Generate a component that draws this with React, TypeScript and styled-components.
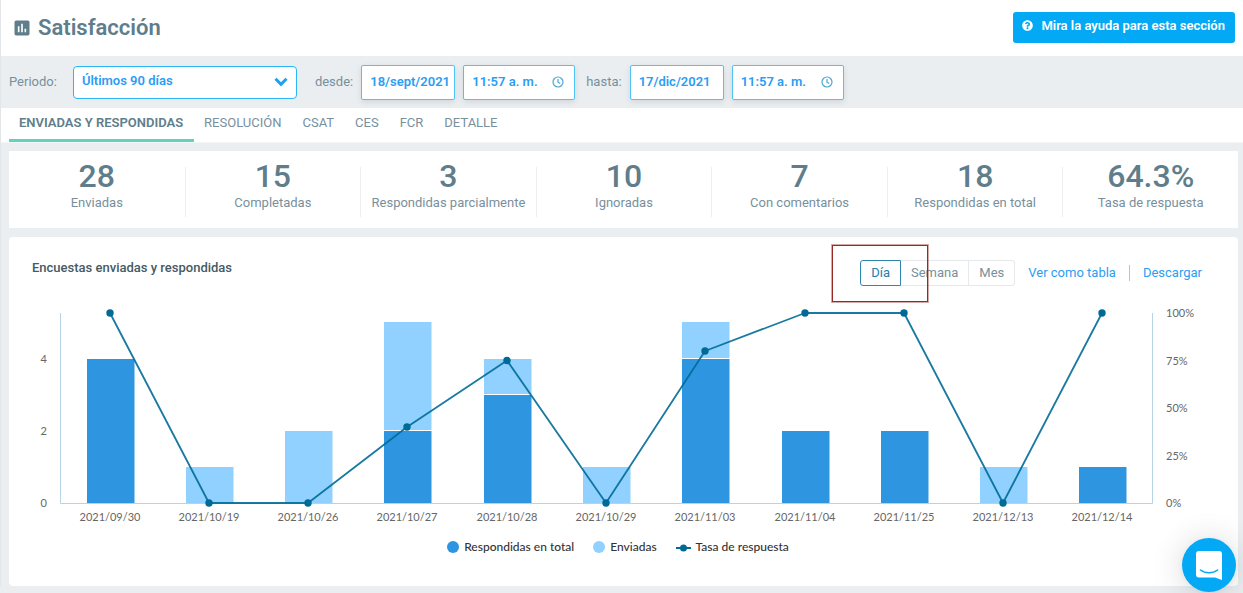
import React, { useLayoutEffect, useRef, useState } from "react";
import styled, { createGlobalStyle } from "styled-components";
import { MdAssessment } from "react-icons/md";
import { FaQuestionCircle } from "react-icons/fa";

const GlobalStyle = createGlobalStyle`
  * { box-sizing: border-box; }
  body {
    margin: 0;
    background: #eaeef1;
    color: #607d8b;
    font: 13px/16px Roboto, "Liberation Sans", sans-serif;
  }
  button, input, select { font: inherit; }
`;

const Page = styled.div`
  border-left: 1px solid #e3e6e8;
`;

const Header = styled.header`
  display: flex;
  align-items: center;
  justify-content: space-between;
  height: 56px;
  padding: 0 8px 2px 11px;
  background: #fff;
`;

const Title = styled.h1`
  display: flex;
  align-items: center;
  gap: 6px;
  margin: 0;
  padding-top: 2px;
  font-size: 22px;
  line-height: 28px;
  font-weight: 600;
`;

const HelpButton = styled.button`
  display: flex;
  align-items: center;
  gap: 8px;
  height: 31px;
  padding: 0 10px 3px 9px;
  border: 0;
  border-radius: 3px;
  background: #03a9f4;
  color: #fff;
  font-weight: 600;
`;

const Filters = styled.form`
  display: flex;
  flex-wrap: wrap;
  align-items: center;
  min-height: 52px;
  padding-left: 8px;
  color: #78909c;
`;

const FieldLabel = styled.label<{ $before: number; $after: number }>`
  margin-left: ${(p) => p.$before}px;
  margin-right: ${(p) => p.$after}px;
`;

const SelectBox = styled.span`
  display: grid;
  align-items: center;
  width: 224px;
  > * { grid-area: 1 / 1; }
  > svg { justify-self: end; margin-right: 9px; pointer-events: none; }
`;

const Select = styled.select`
  appearance: none;
  width: 100%;
  height: 33px;
  padding: 0 30px 2px 8px;
  border: 1px solid #29b6f6;
  border-radius: 4px;
  background: #fff;
  color: #2a9df4;
  font-weight: 600;
`;

const InputBox = styled.span<{ $width: number; $gap?: number }>`
  display: flex;
  align-items: center;
  width: ${(p) => p.$width}px;
  height: 35px;
  margin-left: ${(p) => p.$gap ?? 0}px;
  padding: 0 ${(p) => (p.$gap ? 10 : 4)}px 0 8px;
  border: 1px solid #4fc3f7;
  border-radius: 2px;
  background: #fff;
  box-shadow: 0 2px 6px rgba(0, 0, 0, 0.1);
`;

const Input = styled.input`
  flex: 1;
  min-width: 0;
  padding: 0;
  border: 0;
  background: none;
  color: #2a9df4;
  font-weight: 600;
  outline: 0;
`;

const Tabs = styled.nav`
  display: flex;
  height: 35px;
  padding-left: 8px;
  background: #fff;
  border-bottom: 1px solid #f3f5f6;
`;

const Tab = styled.a<{ $active?: boolean }>`
  height: 34px;
  padding: 7px 11px 0 10px;
  border-bottom: ${(p) => (p.$active ? "3px solid #5fd3bc" : "0")};
  color: ${(p) => (p.$active ? "#607d8b" : "#78909c")};
  font-weight: ${(p) => (p.$active ? 600 : 400)};
  text-decoration: none;
`;

const Stats = styled.section`
  display: grid;
  grid-template-columns: repeat(7, 1fr);
  height: 77px;
  margin: 8px 5px 0 8px;
  padding-top: 16px;
  background: #fff;
`;

const Stat = styled.div`
  height: 50px;
  text-align: center;
  color: #78909c;
  & + & { border-left: 1px solid #eceff1; }
`;

const StatValue = styled.div`
  margin-top: -8px;
  color: #607d8b;
  font-size: 32px;
  line-height: 34px;
  font-weight: 500;
`;

const StatName = styled.div`
  margin-top: 2px;
`;

const Card = styled.section`
  margin: 9px 5px 7px 8px;
  padding-bottom: 31px;
  border-radius: 4px;
  background: #fff;
`;

const CardHeader = styled.div`
  display: flex;
  justify-content: space-between;
  align-items: flex-start;
  padding: 23px 36px 0 23px;
`;

const CardTitle = styled.h2`
  margin: 0;
  color: #455a64;
  font-size: 13px;
  line-height: 16px;
  font-weight: 500;
`;

const Actions = styled.div`
  display: flex;
  align-items: center;
`;

const Toggle = styled.div`
  position: relative;
  display: flex;
  margin-right: 13px;
`;

const Highlight = styled.span`
  position: absolute;
  left: -28px;
  top: -15px;
  width: 96px;
  height: 57px;
  border: 1px solid #962a22;
  box-shadow: 0 0 0 1px rgba(150, 42, 34, 0.4);
  pointer-events: none;
`;

const ToggleButton = styled.button<{ $active?: boolean }>`
  height: 26px;
  padding: 0 10px 1px;
  border: 1px solid ${(p) => (p.$active ? "#2f87b0" : "#e6e9eb")};
  border-radius: ${(p) => (p.$active ? "3px 0 0 3px" : "0")};
  background: #fff;
  color: ${(p) => (p.$active ? "#2480ad" : "#78909c")};
  & + & { border-left: 0; }
  &:nth-of-type(3) { border-radius: 0 3px 3px 0; }
`;

const Link = styled.a`
  color: #2a9df4;
  text-decoration: none;
  & + & {
    margin-left: 13px;
    padding-left: 13px;
    border-left: 1px solid #b8c4ca;
  }
`;

const ChartArea = styled.div`
  height: 240px;
  svg { display: block; }
  text {
    fill: #666;
    font: 11px Lato, sans-serif;
  }
`;

const Legend = styled.div`
  display: flex;
  justify-content: center;
  gap: 19px;
  margin-top: 13px;
  padding-right: 11px;
  color: #333;
  font: 500 12px/16px Lato, sans-serif;
`;

const LegendItem = styled.span`
  display: flex;
  align-items: center;
  gap: 5px;
`;

const Chat = styled.button`
  position: fixed;
  right: 7px;
  bottom: 1px;
  display: grid;
  place-items: center;
  width: 54px;
  height: 54px;
  padding: 0;
  border: 0;
  border-radius: 50%;
  background: #03a9f4;
  box-shadow: 0 1px 6px rgba(0, 0, 0, 0.06), 0 2px 32px rgba(0, 0, 0, 0.16);
`;

const stats = [
  ["28", "Enviadas"],
  ["15", "Completadas"],
  ["3", "Respondidas parcialmente"],
  ["10", "Ignoradas"],
  ["7", "Con comentarios"],
  ["18", "Respondidas en total"],
  ["64.3%", "Tasa de respuesta"],
];

const days = [
  { date: "2021/09/30", answered: 4, sent: 4, rate: 100 },
  { date: "2021/10/19", answered: 0, sent: 1, rate: 0 },
  { date: "2021/10/26", answered: 0, sent: 2, rate: 0 },
  { date: "2021/10/27", answered: 2, sent: 5, rate: 40 },
  { date: "2021/10/28", answered: 3, sent: 4, rate: 75 },
  { date: "2021/10/29", answered: 0, sent: 1, rate: 0 },
  { date: "2021/11/03", answered: 4, sent: 5, rate: 80 },
  { date: "2021/11/04", answered: 2, sent: 2, rate: 100 },
  { date: "2021/11/25", answered: 2, sent: 2, rate: 100 },
  { date: "2021/12/13", answered: 0, sent: 1, rate: 0 },
  { date: "2021/12/14", answered: 1, sent: 1, rate: 100 },
];

const TOP = 27;
const BASE = 217;
const UNIT = 36.2;

const countY = (n: number) => Math.round(BASE + 0.4 - n * UNIT);
const rateY = (r: number) => BASE - ((BASE - TOP) * r) / 100;

function Chart() {
  const box = useRef<HTMLDivElement>(null);
  const [width, setWidth] = useState(1200);

  useLayoutEffect(() => {
    const el = box.current!;
    const measure = () => setWidth(el.clientWidth);
    measure();
    const observer = new ResizeObserver(measure);
    observer.observe(el);
    return () => observer.disconnect();
  }, []);

  const left = 51;
  const right = width - 86;
  const band = (right - left) / days.length;
  const cx = (i: number) => Math.round(left + band * (i + 0.5));

  return (
    <ChartArea ref={box}>
      <svg width={width} height={240} role="img" aria-label="Encuestas enviadas y respondidas">
        {days.map((d, i) => {
          const x = cx(i) - 23;
          const top = countY(d.sent);
          const split = countY(d.answered);
          const seam = d.answered > 0 ? 1 : 0;
          return (
            <g key={d.date}>
              {d.sent > d.answered && (
                <rect x={x} y={top} width={47.5} height={split - top - seam} fill="#90d1ff" />
              )}
              {d.answered > 0 && <rect x={x} y={split} width={47.5} height={BASE - split} fill="#2e95e0" />}
              <text x={cx(i)} y={BASE + 18} textAnchor="middle">{d.date}</text>
            </g>
          );
        })}
        <path d={`M${left + 0.5} ${TOP}V${BASE + 0.5}H${right + 0.5}V${TOP}`} fill="none" stroke="#b7d3e6" />
        {[0, 2, 4].map((n) => (
          <text key={n} x={left - 13} y={countY(n) + 4} textAnchor="end">{n}</text>
        ))}
        {[0, 25, 50, 75, 100].map((n) => (
          <text key={n} x={right + 14} y={rateY(n) + 4}>{n}%</text>
        ))}
        <polyline
          points={days.map((d, i) => `${cx(i)},${rateY(d.rate)}`).join(" ")}
          fill="none"
          stroke="#006a97"
          strokeOpacity={0.9}
          strokeWidth={1.8}
          strokeLinejoin="round"
        />
        {days.map((d, i) => (
          <circle key={d.date} cx={cx(i)} cy={rateY(d.rate)} r={3.7} fill="#006a97" />
        ))}
      </svg>
    </ChartArea>
  );
}

const ClockIcon = () => (
  <svg width="12" height="12" viewBox="0 0 12 12" fill="none" stroke="#4aa8d4" strokeWidth="1.2" aria-hidden="true">
    <circle cx="6" cy="6" r="5" />
    <path d="M6 3v3.200l2.300 1.400" />
  </svg>
);

const Dot = ({ color }: { color: string }) => (
  <svg width="12" height="12" aria-hidden="true">
    <circle cx="6" cy="6" r="6" fill={color} />
  </svg>
);

export default function App() {
  return (
    <Page>
      <GlobalStyle />
      <Header>
        <Title>
          <MdAssessment size={20} aria-hidden="true" />
          Satisfacción
        </Title>
        <HelpButton type="button">
          <FaQuestionCircle size={11} aria-hidden="true" />
          Mira la ayuda para esta sección
        </HelpButton>
      </Header>
      <Filters>
        <FieldLabel htmlFor="period" $before={0} $after={16}>Periodo:</FieldLabel>
        <SelectBox>
          <Select id="period" defaultValue="90">
            <option value="90">Últimos 90 días</option>
          </Select>
          <svg width="14" height="10" viewBox="0 0 14 10" fill="none" stroke="#1da1f2" strokeWidth="3" aria-hidden="true">
            <path d="M1.5 1.8L7 7.3L12.5 1.8" />
          </svg>
        </SelectBox>
        <FieldLabel htmlFor="from" $before={18} $after={8}>desde:</FieldLabel>
        <InputBox $width={94}>
          <Input id="from" defaultValue="18/sept/2021" />
        </InputBox>
        <InputBox $width={112} $gap={8}>
          <Input aria-label="Hora desde" defaultValue="11:57 a. m." />
          <ClockIcon />
        </InputBox>
        <FieldLabel htmlFor="to" $before={11} $after={8}>hasta:</FieldLabel>
        <InputBox $width={94}>
          <Input id="to" defaultValue="17/dic/2021" />
        </InputBox>
        <InputBox $width={112} $gap={8}>
          <Input aria-label="Hora hasta" defaultValue="11:57 a. m." />
          <ClockIcon />
        </InputBox>
      </Filters>
      <Tabs>
        <Tab href="#enviadas" $active>ENVIADAS Y RESPONDIDAS</Tab>
        <Tab href="#resolucion">RESOLUCIÓN</Tab>
        <Tab href="#csat">CSAT</Tab>
        <Tab href="#ces">CES</Tab>
        <Tab href="#fcr">FCR</Tab>
        <Tab href="#detalle">DETALLE</Tab>
      </Tabs>
      <Stats>
        {stats.map(([value, name]) => (
          <Stat key={name}>
            <StatValue>{value}</StatValue>
            <StatName>{name}</StatName>
          </Stat>
        ))}
      </Stats>
      <Card>
        <CardHeader>
          <CardTitle>Encuestas enviadas y respondidas</CardTitle>
          <Actions>
            <Toggle>
              <ToggleButton type="button" $active>Día</ToggleButton>
              <ToggleButton type="button">Semana</ToggleButton>
              <ToggleButton type="button">Mes</ToggleButton>
              <Highlight />
            </Toggle>
            <Link href="#tabla">Ver como tabla</Link>
            <Link href="#descargar">Descargar</Link>
          </Actions>
        </CardHeader>
        <Chart />
        <Legend>
          <LegendItem><Dot color="#2e95e0" />Respondidas en total</LegendItem>
          <LegendItem><Dot color="#90d1ff" />Enviadas</LegendItem>
          <LegendItem>
            <svg width="15" height="12" aria-hidden="true">
              <path d="M0 7h15" stroke="#006a97" strokeWidth="2" />
              <circle cx="7.5" cy="7" r="3.5" fill="#006a97" />
            </svg>
            Tasa de respuesta
          </LegendItem>
        </Legend>
      </Card>
      <Chat type="button" aria-label="Abrir chat">
        <svg width="26" height="29" viewBox="0 0 26 29" aria-hidden="true">
          <path d="M3 0h20a3 3 0 0 1 3 3V29l-7-2.500H3a3 3 0 0 1-3-3V3a3 3 0 0 1 3-3z" fill="#fff" />
          <path d="M4.500 19c4.500 3.600 12.500 3.600 17 0" fill="none" stroke="#03a9f4" strokeWidth="1.6" strokeLinecap="round" />
        </svg>
      </Chat>
    </Page>
  );
}
